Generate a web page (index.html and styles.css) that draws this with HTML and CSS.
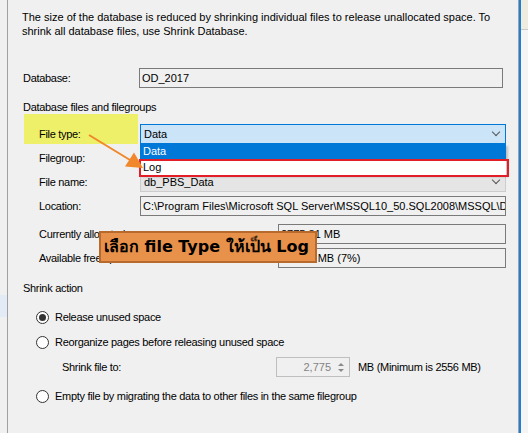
FILE: index.html
```html
<!DOCTYPE html>
<html>
<head>
<meta charset="utf-8">
<link rel="stylesheet" href="styles.css">
</head>
<body>
<div class="screen">
  <div class="leftgap"><div class="bluebit"></div></div>
  <div class="panel">
    <p class="desc">The size of the database is reduced by shrinking individual files to release unallocated space. To<br>shrink all database files, use Shrink Database.</p>
    <div class="db-row">
      <span class="db-label">Database:</span>
      <div class="tb tb-db">OD_2017</div>
    </div>
    <div class="section">Database files and filegroups</div>
    <div class="files">
      <span class="lbl">File type:</span>
      <div class="combo combo-active"><span>Data</span><span class="chev"></span></div>
      <span class="lbl">Filegroup:</span>
      <div class="combo combo-disabled"><span></span><span class="chev"></span></div>
      <span class="lbl">File name:</span>
      <div class="combo combo-disabled"><span>db_PBS_Data</span><span class="chev"></span></div>
      <span class="lbl">Location:</span>
      <div class="tb tb-loc">C:\Program Files\Microsoft SQL Server\MSSQL10_50.SQL2008\MSSQL\DATA\db_PBS_Data.mdf</div>
    </div>
    <div class="space">
      <span class="lbl">Currently allocated space:</span>
      <div class="tb">2775.81 MB</div>
      <span class="lbl">Available free space:</span>
      <div class="tb">184.56 MB (7%)</div>
    </div>
    <div class="section section-shrink">Shrink action</div>
    <div class="options">
      <div class="radio-row r1"><span class="radio checked"></span><span>Release unused space</span></div>
      <div class="radio-row r2"><span class="radio"></span><span>Reorganize pages before releasing unused space</span></div>
      <div class="shrink-row">
        <span class="shrink-lbl">Shrink file to:</span>
        <div class="spin"><span class="spin-val">2,775</span><span class="spin-btns"><span class="up"></span><span class="down"></span></span></div>
        <span class="mb">MB (Minimum is 2556 MB)</span>
      </div>
      <div class="radio-row r3"><span class="radio"></span><span>Empty file by migrating the data to other files in the same filegroup</span></div>
    </div>
  </div>
  <div class="blueline"></div>
  <div class="rightstrip"><div class="beige"></div></div>

  <div class="highlight"></div>
  <div class="hl-label">File type:</div>
  <div class="droplist">
    <div class="opt opt-sel">Data</div>
    <div class="opt">Log</div>
  </div>
  <div class="redbox"></div>
  <svg class="arrow" width="70" height="50" viewBox="80 125 70 50">
    <line x1="89" y1="135" x2="130" y2="160" stroke="#f0872b" stroke-width="2"/>
    <polygon points="143,168 125,166.5 134,152.5" fill="#f0872b"/>
  </svg>
  <div class="callout">เลือก file Type ให้เป็น Log</div>
</div>
</body>
</html>
```
FILE: styles.css
```css
* { box-sizing: border-box; }
html, body { margin: 0; padding: 0; }
body { background: #f0f0f0; }

.screen {
  position: relative;
  width: 528px;
  height: 433px;
  overflow: hidden;
  display: flex;
  background: #f0f0f0;
  font-family: "Liberation Sans", Arial, sans-serif;
  font-size: 11px;
  color: #000;
}

.leftgap { width: 7px; flex: none; }
.bluebit { margin-top: 295px; height: 22px; background: #e3ecf6; }

.panel {
  width: 512px;
  flex: none;
  border-left: 1px solid #a0a0a0;
  border-right: 1px solid #a0a0a0;
  padding: 10px 0 0 15px;
  letter-spacing: -0.3px;
}

.desc {
  margin: 0 0 0 -1px;
  line-height: 14px;
  letter-spacing: 0;
}

.db-row {
  display: flex;
  align-items: center;
  margin-top: 30px;
  height: 20px;
}
.db-label { width: 116px; }

.tb {
  height: 20px;
  border: 1px solid #7a7a7a;
  background: #f0f0f0;
  padding: 0 2px;
  line-height: 18px;
  white-space: nowrap;
  overflow: hidden;
  letter-spacing: 0;
}
.tb-db { width: 364px; }

.section {
  margin-top: 12px;
  line-height: 14px;
}

.files {
  margin-top: 10px;
  margin-left: 16px;
  display: grid;
  grid-template-columns: 101px 366px;
  grid-auto-rows: 20px;
  row-gap: 4px;
  align-items: center;
}

.combo {
  height: 20px;
  display: flex;
  align-items: center;
  justify-content: space-between;
  padding: 0 6px 0 3px;
  border: 1px solid #adadad;
  letter-spacing: 0;
}
.combo-active { background: #cce4f7; border-color: #0078d7; }
.combo-disabled { background: #e5e5e5; border-color: #cccccc; }
.chev {
  width: 6px;
  height: 6px;
  border-right: 1px solid #555;
  border-bottom: 1px solid #555;
  transform: translateY(-2px) rotate(45deg);
}

.space {
  margin-top: 8px;
  margin-left: 16px;
  display: grid;
  grid-template-columns: 239px 228px;
  grid-auto-rows: 20px;
  row-gap: 4px;
  align-items: center;
}

.section-shrink { margin-top: 13px; }

.options { margin-left: 13px; }
.radio-row {
  display: flex;
  align-items: center;
  gap: 6px;
  height: 16px;
}
.r1 { margin-top: 14px; }
.r2 { margin-top: 9px; }
.r3 { margin-top: 11px; }
.radio {
  width: 13px;
  height: 13px;
  border: 1px solid #333;
  border-radius: 50%;
  background: #fff;
  display: flex;
  align-items: center;
  justify-content: center;
}
.radio.checked::after {
  content: "";
  width: 7px;
  height: 7px;
  border-radius: 50%;
  background: #333;
}

.shrink-row {
  display: flex;
  align-items: center;
  margin-top: 7px;
  margin-left: 26px;
  height: 20px;
}
.shrink-lbl { width: 214px; }
.spin {
  width: 74px;
  height: 20px;
  border: 1px solid #bfbfbf;
  display: flex;
  align-items: center;
  justify-content: flex-end;
  letter-spacing: 0;
}
.spin-val { color: #838383; margin-right: 3px; }
.spin-btns {
  width: 14px;
  height: 18px;
  display: flex;
  flex-direction: column;
  align-items: center;
  justify-content: center;
  gap: 3px;
  margin-right: 1px;
}
.up, .down { width: 0; height: 0; border-left: 3px solid transparent; border-right: 3px solid transparent; }
.up { border-bottom: 3px solid #8a8a8a; }
.down { border-top: 3px solid #8a8a8a; }
.mb { margin-left: 8px; }

.blueline { width: 2px; flex: none; background: #1e7fd6; }
.rightstrip { flex: 1; background: #f5f5f5; }
.beige { height: 30px; background: #eeecde; border-bottom: 1px solid #c9c9c9; }

/* annotations / overlays */
.highlight {
  position: absolute;
  left: 24px;
  top: 114px;
  width: 114px;
  height: 30px;
  background: #eef06a;
}
.hl-label {
  position: absolute;
  left: 39px;
  top: 124px;
  height: 20px;
  line-height: 20px;
  letter-spacing: -0.3px;
}
.droplist {
  position: absolute;
  left: 140px;
  top: 144px;
  width: 366px;
  background: #fff;
  box-shadow: 2px 2px 2px rgba(0,0,0,0.2);
}
.opt { height: 16px; line-height: 16px; padding-left: 3px; }
.opt-sel { height: 15px; line-height: 15px; background: #0078d7; color: #fff; }
.redbox {
  position: absolute;
  left: 139px;
  top: 159px;
  width: 370px;
  height: 18px;
  border: 2px solid #e41e26;
}
.arrow { position: absolute; left: 80px; top: 125px; }
.callout {
  position: absolute;
  left: 99px;
  top: 231px;
  width: 218px;
  height: 32px;
  background: #e8914a;
  border: 2px solid #b86a2c;
  font-family: "Tahoma", "DejaVu Sans", "Noto Sans", sans-serif;
  font-weight: bold;
  font-size: 16px;
  line-height: 28px;
  padding-left: 3px;
  white-space: nowrap;
}
```
